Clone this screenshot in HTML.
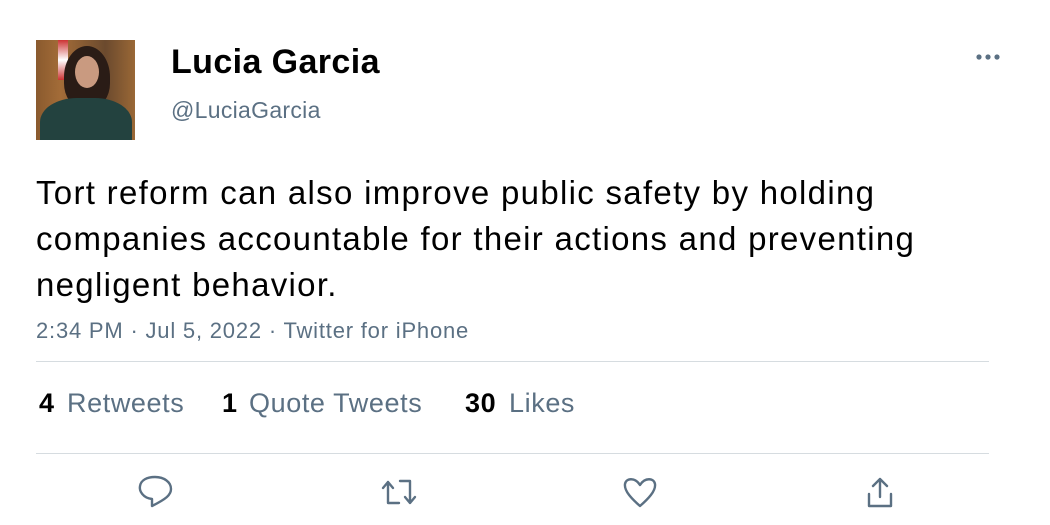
<!DOCTYPE html>
<html><head><style>
body{margin:0;width:1050px;height:525px;background:#fff;font-family:"Liberation Sans",Arial,sans-serif;position:relative;overflow:hidden}
.a{position:absolute;white-space:nowrap}
.s{font-size:27px;color:#5b7083;top:388px;letter-spacing:0.6px}
.s b{color:#000}
</style></head><body>
<div class="a" style="left:36px;top:40px;width:99px;height:100px;background:linear-gradient(90deg,#8a5a2e 0%,#a36c38 25%,#6b4a2e 70%,#9a6836 100%);overflow:hidden">
 <div class="a" style="left:22px;top:0;width:10px;height:40px;background:linear-gradient(#c33,#fff,#c33)"></div>
 <div class="a" style="left:28px;top:6px;width:46px;height:62px;border-radius:50% 50% 40% 40%;background:#2a1c16"></div>
 <div class="a" style="left:39px;top:16px;width:24px;height:32px;border-radius:50%;background:#c99a80"></div>
 <div class="a" style="left:4px;top:58px;width:92px;height:60px;border-radius:40% 40% 0 0;background:#23423f"></div>
</div>
<div class="a" style="left:171px;top:43px;font-size:34px;font-weight:bold;color:#000;letter-spacing:0.4px">Lucia Garcia</div>
<div class="a" style="left:171px;top:97px;font-size:23px;color:#5b7083;letter-spacing:0.3px">@LuciaGarcia</div>
<svg class="a" style="left:974px;top:52px" width="30" height="10" fill="#5b7083"><circle cx="5" cy="5" r="2.6"/><circle cx="14" cy="5" r="2.6"/><circle cx="23" cy="5" r="2.6"/></svg>
<div class="a" style="left:36px;top:170px;font-size:33px;line-height:46px;color:#000;letter-spacing:1.3px">Tort reform can also improve public safety by holding<br>companies accountable for their actions and preventing<br>negligent behavior.</div>
<div class="a" style="left:36px;top:318px;font-size:22px;color:#5b7083;letter-spacing:0.8px">2:34 PM · Jul 5, 2022 · Twitter for iPhone</div>
<div class="a" style="left:36px;top:361px;width:953px;height:1px;background:#d6dce0"></div>
<div class="a s" style="left:39px"><b>4</b></div><div class="a s" style="left:67px">Retweets</div>
<div class="a s" style="left:222px"><b>1</b></div><div class="a s" style="left:249px">Quote Tweets</div>
<div class="a s" style="left:465px"><b>30</b></div><div class="a s" style="left:509px">Likes</div>
<div class="a" style="left:36px;top:453px;width:953px;height:1px;background:#d6dce0"></div>
<svg class="a" style="left:0;top:0" width="1050" height="525" fill="none" stroke="#5b7083" stroke-width="2.4" stroke-linecap="round" stroke-linejoin="round">
 <path d="M152 506 L152 499 C143 498 139 491 140 486 C141 480 147 477 155 477 C164 477 171 482 171 489 C171 495 166 499 152 506 Z"/>
 <path d="M383 488 L388 482 L393 488 M388 482 V503 H399 M400 481 H410 V503 M405 497 L410 503 L415 497"/>
 <path d="M640 506 C632 499 624 491 625 484 C626 478 635 477 640 485 C645 477 654 478 655 484 C656 491 648 499 640 506 Z"/>
 <path d="M880 479 V497 M873 486 L880 479 L887 486 M869 494 V506 H891 V494"/>
</svg>
</body></html>
